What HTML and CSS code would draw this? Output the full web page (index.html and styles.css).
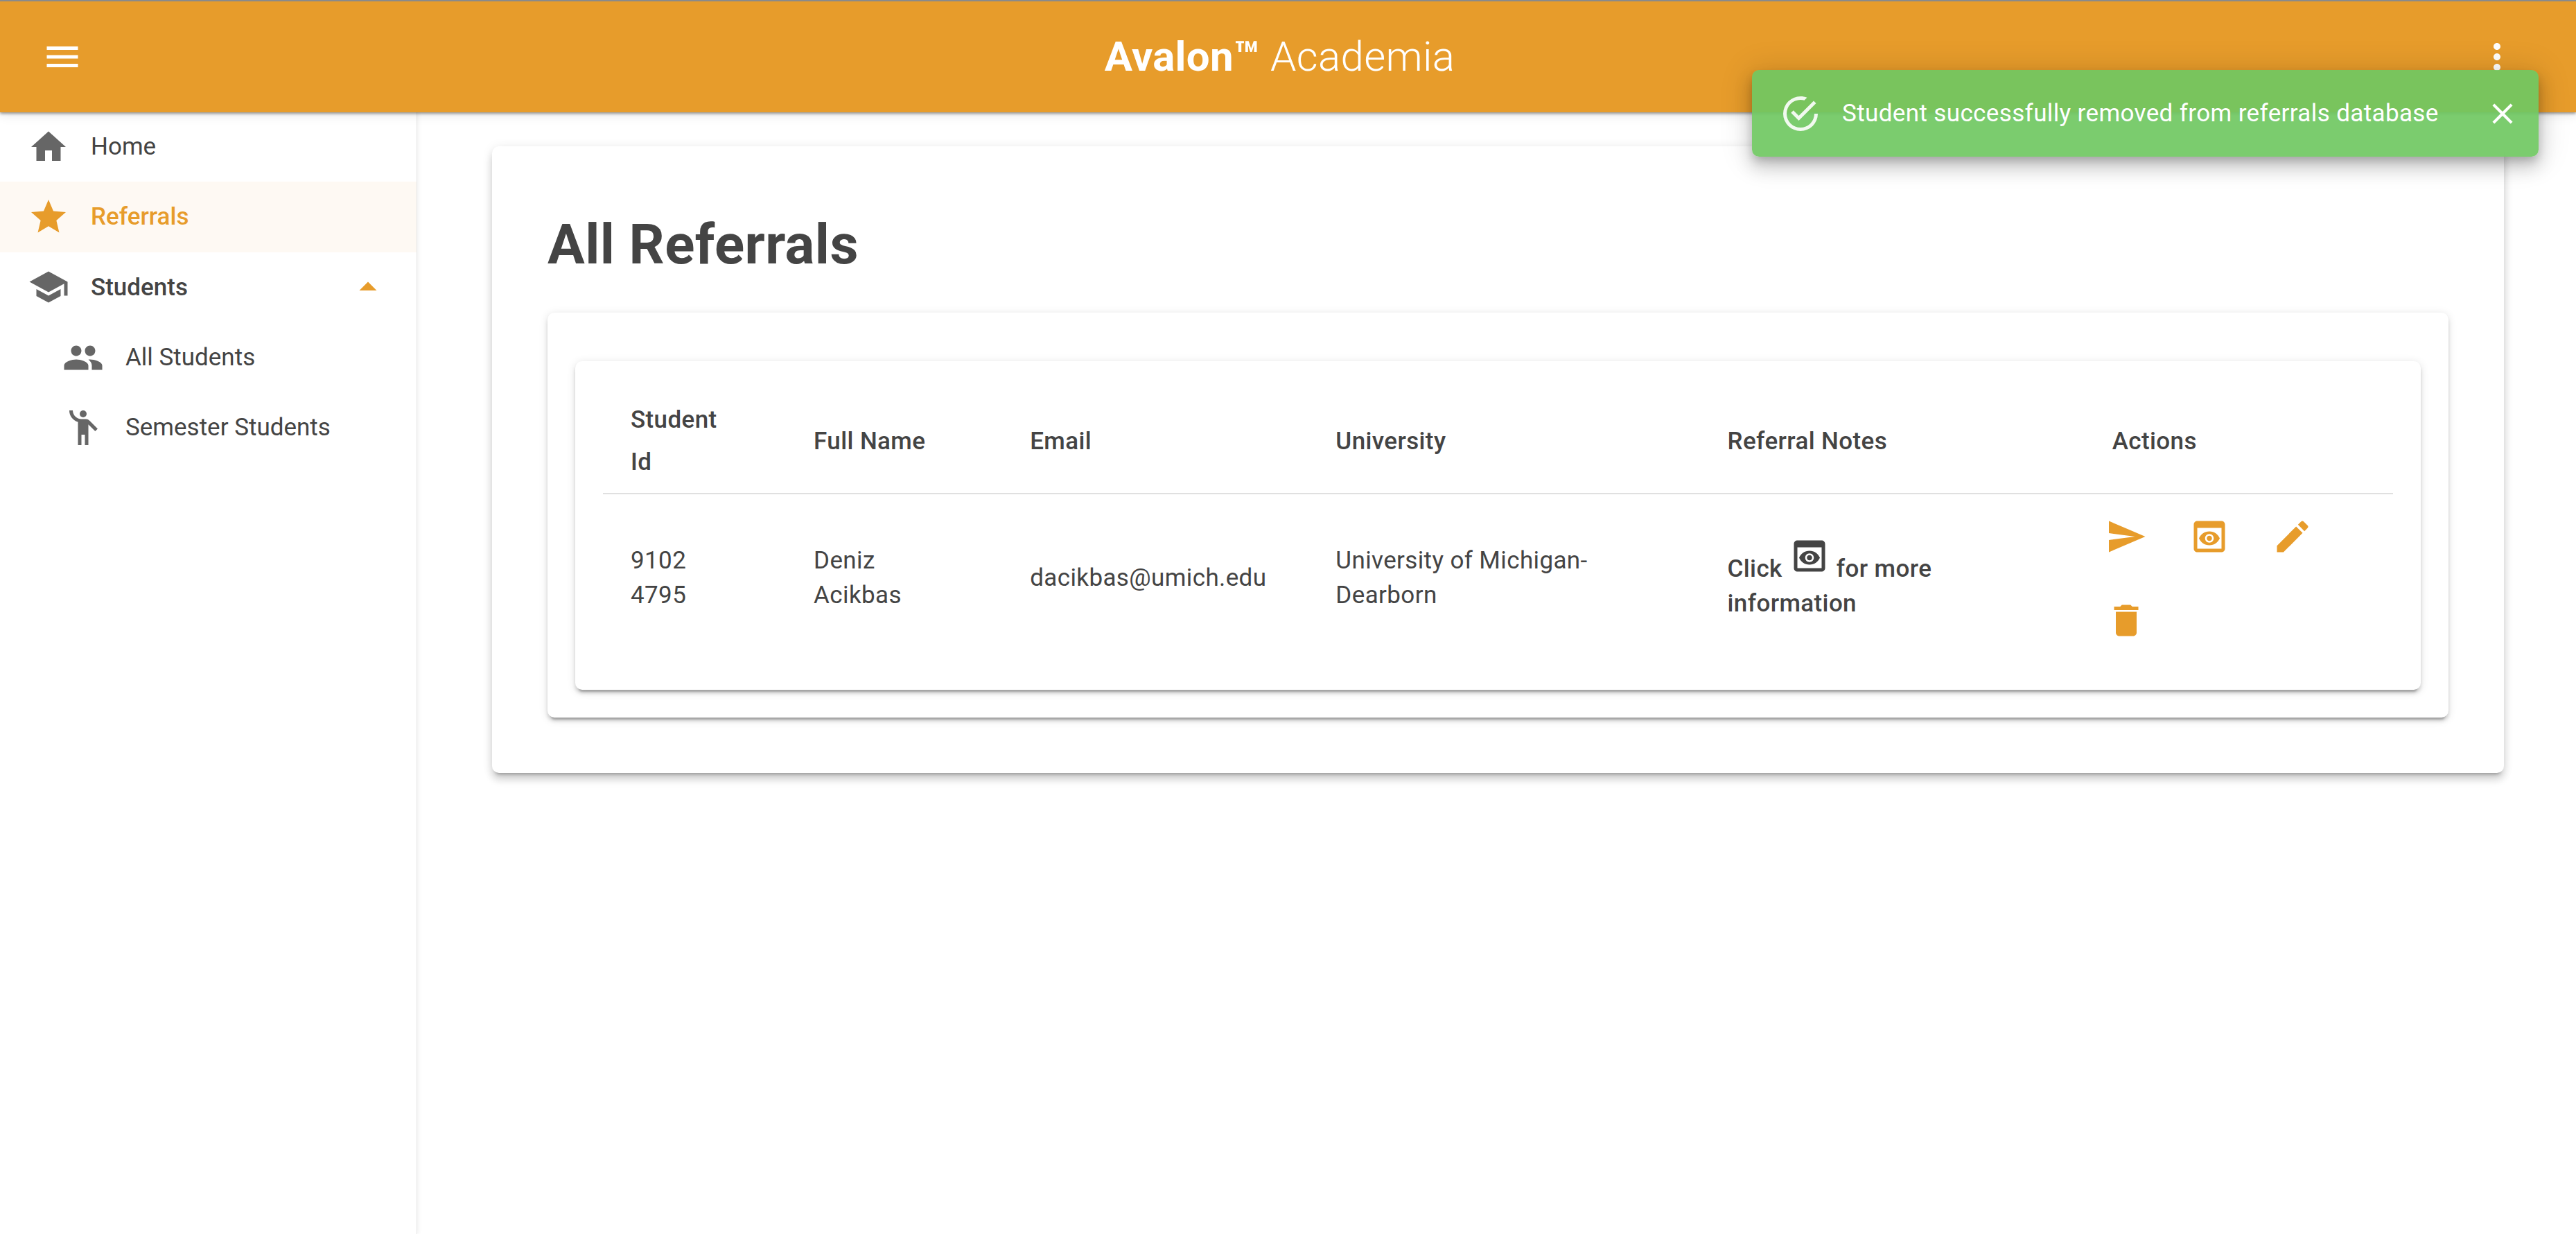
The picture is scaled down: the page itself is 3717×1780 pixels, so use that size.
FILE: index.html
```html
<!DOCTYPE html>
<html lang="en">
<head>
<meta charset="utf-8">
<title>Avalon Academia</title>
<link rel="stylesheet" href="styles.css">
</head>
<body>
<div class="app">
  <header class="topbar">
    <button class="bar-btn" aria-label="Menu"><svg class="ico" viewBox="0 0 24 24"><path d="M3 18h18v-2H3v2zm0-5h18v-2H3v2zm0-5h18V6H3v2z"/></svg></button>
    <h1 class="brand"><b>Avalon™</b> Academia</h1>
    <button class="bar-btn" aria-label="More"><svg class="ico" viewBox="0 0 24 24"><path d="M12 8c1.1 0 2-.9 2-2s-.9-2-2-2-2 .9-2 2 .9 2 2 2zm0 2c-1.1 0-2 .9-2 2s.9 2 2 2 2-.9 2-2-.9-2-2-2zm0 6c-1.1 0-2 .9-2 2s.9 2 2 2 2-.9 2-2-.9-2-2-2z"/></svg></button>
  </header>
  <div class="body-row">
    <nav class="sidebar">
      <a class="nav-item"><svg class="ico" viewBox="0 0 24 24"><path d="M10 20v-6h4v6h5v-8h3L12 3 2 12h3v8z"/></svg><span>Home</span></a>
      <a class="nav-item active"><svg class="ico" viewBox="0 0 24 24"><path d="M12 17.27L18.18 21l-1.64-7.03L22 9.24l-7.19-.61L12 2 9.19 8.63 2 9.24l5.46 4.73L5.82 21z"/></svg><span>Referrals</span></a>
      <a class="nav-item strong"><svg class="ico" viewBox="0 0 24 24"><path d="M5 13.18v4L12 21l7-3.82v-4L12 17l-7-3.82zM12 3L1 9l11 6 9-4.91V17h2V9L12 3z"/></svg><span class="grow">Students</span><svg class="ico caret" viewBox="0 0 24 24"><path d="M7 14l5-5 5 5z"/></svg></a>
      <a class="nav-item sub"><svg class="ico" viewBox="0 0 24 24"><path d="M16 11c1.66 0 2.99-1.34 2.99-3S17.66 5 16 5c-1.66 0-3 1.34-3 3s1.34 3 3 3zm-8 0c1.66 0 2.99-1.34 2.99-3S9.66 5 8 5C6.34 5 5 6.34 5 8s1.34 3 3 3zm0 2c-2.33 0-7 1.17-7 3.5V19h14v-2.5c0-2.33-4.67-3.5-7-3.5zm8 0c-.29 0-.62.02-.97.05 1.16.84 1.97 1.97 1.97 3.45V19h6v-2.5c0-2.33-4.67-3.5-7-3.5z"/></svg><span>All Students</span></a>
      <a class="nav-item sub"><svg class="ico" viewBox="0 0 24 24"><circle cx="12" cy="4" r="2"/><path d="M15.89 8.11C15.5 7.72 14.83 7 13.53 7h-2.54C8.24 6.99 6 4.75 6 2H4c0 3.16 2.11 5.84 5 6.71V22h2v-6h2v6h2V10.05L18.95 14l1.41-1.41-4.47-4.48z"/></svg><span>Semester Students</span></a>
    </nav>
    <main class="main">
      <section class="card outer">
        <h2 class="page-title">All Referrals</h2>
        <div class="card middle">
          <div class="card inner">
            <table class="table">
              <colgroup>
                <col class="c-id"><col class="c-name"><col class="c-email"><col class="c-uni"><col class="c-notes"><col class="c-actions">
              </colgroup>
              <thead>
                <tr><th class="cell-id">Student Id</th><th class="cell-name">Full Name</th><th>Email</th><th>University</th><th>Referral Notes</th><th>Actions</th></tr>
              </thead>
              <tbody>
                <tr>
                  <td class="cell-id">9102 4795</td>
                  <td class="cell-name">Deniz Acikbas</td>
                  <td>dacikbas@umich.edu</td>
                  <td>University of Michigan-Dearborn</td>
                  <td class="notes"><span class="note-text">Click <svg class="ico inline" viewBox="0 0 24 24"><path d="M19 3H5c-1.11 0-2 .9-2 2v14c0 1.1.89 2 2 2h14c1.1 0 2-.9 2-2V5c0-1.1-.9-2-2-2zm0 16H5V7h14v12zm-5.5-6c0 .83-.67 1.5-1.5 1.5s-1.5-.67-1.5-1.5.67-1.5 1.5-1.5 1.5.67 1.5 1.5zM12 9c-2.73 0-5.06 1.66-6 4 .94 2.34 3.27 4 6 4s5.06-1.66 6-4c-.94-2.34-3.27-4-6-4zm0 6.5c-1.38 0-2.5-1.12-2.5-2.5s1.12-2.5 2.5-2.5 2.5 1.12 2.5 2.5-1.12 2.5-2.5 2.5z"/></svg> for more information</span></td>
                  <td class="actions">
                    <div class="action-wrap">
                      <button class="act" aria-label="Send"><svg class="ico" viewBox="0 0 24 24"><path d="M2.01 21L23 12 2.01 3 2 10l15 2-15 2z"/></svg></button>
                      <button class="act" aria-label="Preview"><svg class="ico" viewBox="0 0 24 24"><path d="M19 3H5c-1.11 0-2 .9-2 2v14c0 1.1.89 2 2 2h14c1.1 0 2-.9 2-2V5c0-1.1-.9-2-2-2zm0 16H5V7h14v12zm-5.5-6c0 .83-.67 1.5-1.5 1.5s-1.5-.67-1.5-1.5.67-1.5 1.5-1.5 1.5.67 1.5 1.5zM12 9c-2.73 0-5.06 1.66-6 4 .94 2.34 3.27 4 6 4s5.06-1.66 6-4c-.94-2.34-3.27-4-6-4zm0 6.5c-1.38 0-2.5-1.12-2.5-2.5s1.12-2.5 2.5-2.5 2.5 1.12 2.5 2.5-1.12 2.5-2.5 2.5z"/></svg></button>
                      <button class="act" aria-label="Edit"><svg class="ico" viewBox="0 0 24 24"><path d="M3 17.25V21h3.75L17.81 9.94l-3.75-3.75L3 17.25zM20.71 7.04c.39-.39.39-1.02 0-1.41l-2.34-2.34c-.39-.39-1.02-.39-1.41 0l-1.83 1.83 3.75 3.75 1.83-1.83z"/></svg></button>
                      <button class="act" aria-label="Delete"><svg class="ico" viewBox="0 0 24 24"><path d="M6 19c0 1.1.9 2 2 2h8c1.1 0 2-.9 2-2V7H6v12zM19 4h-3.5l-1-1h-5l-1 1H5v2h14V4z"/></svg></button>
                    </div>
                  </td>
                </tr>
              </tbody>
            </table>
          </div>
        </div>
      </section>
    </main>
  </div>
  <div class="toast">
    <svg class="ico toast-ico" viewBox="0 0 24 24"><path d="M20,12A8,8 0 0,1 12,20A8,8 0 0,1 4,12A8,8 0 0,1 12,4C12.76,4 13.5,4.11 14.2,4.31L15.77,2.74C14.61,2.26 13.34,2 12,2A10,10 0 0,0 2,12A10,10 0 0,0 12,22A10,10 0 0,0 22,12M7.91,10.08L6.5,11.5L11,16L21,6L19.59,4.58L11,13.17L7.91,10.08Z"/></svg>
    <span class="toast-msg">Student successfully removed from referrals database</span>
    <svg class="ico toast-x" viewBox="0 0 24 24"><path d="M19 6.41L17.59 5 12 10.59 6.41 5 5 6.41 10.59 12 5 17.59 6.41 19 12 13.41 17.59 19 19 17.59 13.41 12z"/></svg>
  </div>
</div>
</body>
</html>
```
FILE: styles.css
```css
* { box-sizing: border-box; }
html, body { margin: 0; height: 100%; }
body { font-family: Roboto, "Liberation Sans", sans-serif; color: #444; background: #fff; overflow: hidden; }
.app { position: relative; height: 1780px; display: flex; flex-direction: column; }
.ico { width: 60px; height: 60px; fill: currentColor; display: block; flex: none; }

.topbar { position: relative; z-index: 2; height: 162px; flex: none; display: flex; align-items: center; padding: 0 84px 0 60px; background: #e79c2b; border-top: 2px solid #8a8a8a; color: #fff; box-shadow: 0 2px 4px rgba(0,0,0,.4), 0 5px 15px rgba(0,0,0,.08); }
.bar-btn { width: 60px; height: 60px; padding: 0; border: 0; background: none; color: inherit; }
.brand { flex: 1; margin: 0; text-align: center; font-size: 60px; font-weight: 300; line-height: 1.2; letter-spacing: .3px; }
.brand b { font-weight: 700; }

.body-row { flex: 1; display: flex; min-height: 0; }
.sidebar { width: 601.5px; flex: none; margin-top: -1px; border-right: 1.5px solid #e6e6e6; box-shadow: 2px 0 6px rgba(0,0,0,.06); }
.nav-item { height: 101.3px; display: flex; align-items: center; padding: 0 40px; gap: 31px; font-size: 35px; color: #444; }
.nav-item .ico { color: #666; }
.nav-item.active { background: #fef9f3; color: #e79c2b; font-weight: 500; }
.nav-item.active .ico { color: #e79c2b; }
.nav-item.strong { font-weight: 500; }
.nav-item.sub { padding-left: 90px; }
.grow { flex: 1; }
.nav-item .caret { color: #e79c2b; }

.main { flex: 1; padding: 49px 104px 0 108.5px; }
.card { background: #fff; border-radius: 10px; box-shadow: 0 7.5px 2.5px -5px rgba(0,0,0,.2), 0 5px 5px rgba(0,0,0,.14), 0 2.5px 12.5px rgba(0,0,0,.12); }
.outer { padding: 80px; box-shadow: 0 7px 4px -5px rgba(0,0,0,.25), 0 10px 12px rgba(0,0,0,.14), 0 2.5px 15px rgba(0,0,0,.1); }
.page-title { margin: 12px 0 48px; font-size: 80px; font-weight: 700; line-height: 100px; letter-spacing: .4px; color: #444; }
.middle { padding: 70px 40px 40px; }
.inner { padding: 40px; }

.table { width: 100%; table-layout: fixed; border-collapse: collapse; font-size: 35px; letter-spacing: .375px; }
.c-id { width: 264px; }
.c-name { width: 312px; }
.c-email { width: 441px; }
.c-uni { width: 565px; }
.c-notes { width: 555px; }
.c-actions { width: 445px; }
.table th { padding: 14px 40px; text-align: left; font-weight: 500; line-height: 61px; border-bottom: 2.5px solid #e0e0e0; }
.table td { padding: 0 40px; line-height: 50px; height: 242px; vertical-align: middle; }
.table .cell-id { padding-right: 70px; }
.table .cell-name { padding-right: 60px; }
.table td.notes { font-weight: 500; }
.note-text { display: block; }
.ico.inline { display: inline-block; color: #444; }
.table td.actions { padding: 0; }
.action-wrap { display: flex; flex-wrap: wrap; width: 404px; }
.act { width: 120px; height: 121px; padding: 30px; border: 0; background: none; color: #e79c2b; }

.toast { position: absolute; z-index: 3; left: 2528px; top: 101px; width: 1135px; height: 125px; display: flex; align-items: center; padding: 0 27px 0 40px; border-radius: 10px; background: rgba(112,200,98,.92); color: #fff; box-shadow: 0 7.5px 12.5px -2.5px rgba(0,0,0,.2), 0 15px 25px 2.5px rgba(0,0,0,.14), 0 2.5px 45px 5px rgba(0,0,0,.12); font-size: 35px; letter-spacing: .375px; }
.toast-ico { opacity: .9; margin-right: 30px; }
.toast-msg { flex: 1; }
.toast-x { width: 50px; height: 50px; }
```
